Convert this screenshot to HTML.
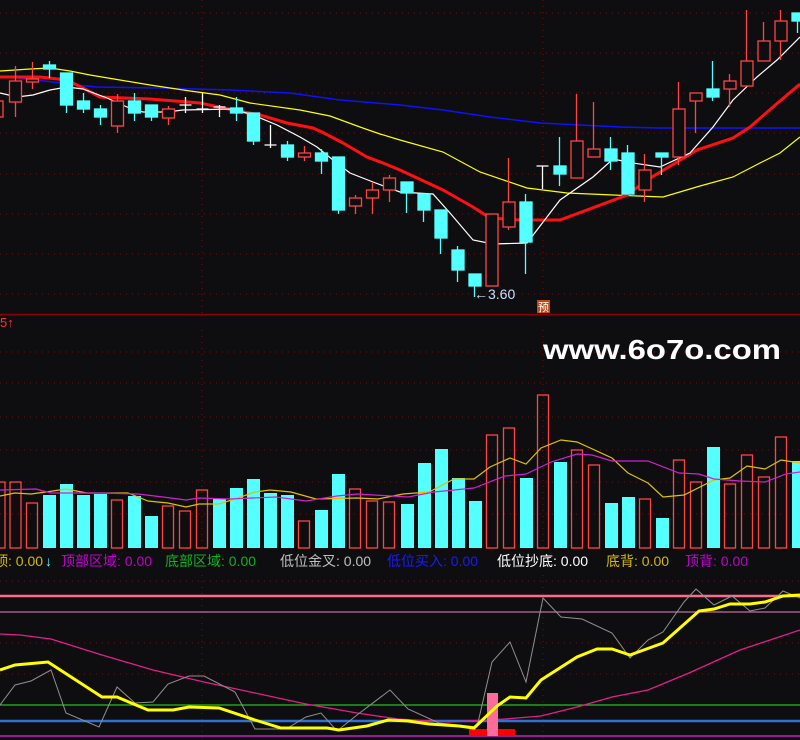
<!DOCTYPE html>
<html><head><meta charset="utf-8"><style>
html,body{margin:0;padding:0;background:#0e0e11;width:800px;height:740px;overflow:hidden}
svg{display:block}
text{font-family:"Liberation Sans","Noto Sans CJK SC",sans-serif}
</style></head><body>
<svg width="800" height="740" viewBox="0 0 800 740" xmlns="http://www.w3.org/2000/svg">
<rect width="800" height="740" fill="#0e0e11"/>
<g stroke="#7a0e0e" stroke-width="1" stroke-dasharray="1,5">
<path d="M0 13H800M0 53H800M0 93H800M0 133H800M0 174H800M0 214H800M0 254H800M0 294H800"/>
<path d="M0 352H800M0 383H800M0 417H800M0 450H800M0 482H800M0 514H800"/>
<path d="M0 581H800M0 643H800M0 674H800"/>
<path d="M202 0V314M543 0V314M202 330V548M543 330V548M202 575V740M543 575V740"/>
</g>
<line x1="0" y1="314.5" x2="800" y2="314.5" stroke="#8a0000" stroke-width="1.5"/>
<text x="0" y="327" fill="#ff3030" font-size="13">5↑</text>

<!-- MA lines main -->
<polyline fill="none" stroke="#1010ff" stroke-width="1.5" points="0,76 27,79 53,82 77,85 97,87 160,88 230,90 290,93 340,100 400,105 443,110 490,117 540,123 580,125 620,127 660,128 800,128"/>
<polyline fill="none" stroke="#ffff00" stroke-width="1.2" points="0,71 30,69 50,68 70,71 90,75 120,80 150,85 190,91 220,95 250,103 300,110 330,116 360,127 380,134 400,140 443,152 480,172 527,188 567,193 613,195 663,197 700,186 733,177 760,163 780,153 800,137"/>
<polyline fill="none" stroke="#ff1010" stroke-width="3" points="0,77 40,77 67,80 83,88 100,97 150,99 200,103 233,110 260,115 287,123 313,128 322,132 343,143 367,157 383,163 400,170 443,190 473,207 490,218 520,220 560,220 587,210 627,195 647,180 697,150 733,138 750,127 773,107 800,84"/>
<polyline fill="none" stroke="#ffffff" stroke-width="1.2" points="0,93 17,97 33,95 50,90 67,87 83,89 107,98 127,107 143,112 167,112 183,110 233,109 253,115 277,125 300,137 317,147 333,160 350,173 373,182 400,192 433,194 450,213 473,240 493,244 527,243 560,200 593,177 613,159 633,163 660,167 690,153 713,127 733,100 757,77 777,60 800,37"/>

<!-- candles -->
<g stroke-width="1.3">
<g stroke="#ff4444" fill="#0e0e11">
<line x1="-1.5" y1="95" x2="-1.5" y2="122"/><rect x="-8" y="101" width="11" height="16"/>
<line x1="15.5" y1="66" x2="15.5" y2="117"/><rect x="9.5" y="81" width="12" height="21"/>
<line x1="32.5" y1="62" x2="32.5" y2="89"/><rect x="26.5" y="79" width="12" height="3"/>
<line x1="117.5" y1="94" x2="117.5" y2="133"/><rect x="111.5" y="101" width="12" height="25"/>
<line x1="168.5" y1="106" x2="168.5" y2="125"/><rect x="162.5" y="109" width="12" height="9"/>
<line x1="304.5" y1="146" x2="304.5" y2="161"/><rect x="298.5" y="153" width="12" height="4"/>
<line x1="355.5" y1="195" x2="355.5" y2="214"/><rect x="349.5" y="198" width="12" height="8"/>
<line x1="372.5" y1="182" x2="372.5" y2="214"/><rect x="366.5" y="190" width="12" height="8"/>
<line x1="389.5" y1="175" x2="389.5" y2="202"/><rect x="383.5" y="178" width="12" height="12"/>
<rect x="486" y="214" width="12" height="72"/>
<line x1="508.5" y1="158" x2="508.5" y2="230"/><rect x="503" y="202" width="12" height="25"/>
<line x1="576.5" y1="94" x2="576.5" y2="178"/><rect x="571" y="141" width="12" height="37"/>
<line x1="593.5" y1="102" x2="593.5" y2="157"/><rect x="588" y="149" width="12" height="8"/>
<line x1="644.5" y1="154" x2="644.5" y2="202"/><rect x="639" y="170" width="12" height="20"/>
<line x1="678.5" y1="82" x2="678.5" y2="165"/><rect x="673" y="109" width="12" height="48"/>
<line x1="695.5" y1="93" x2="695.5" y2="133"/><rect x="690" y="93" width="12" height="8"/>
<line x1="729.5" y1="74" x2="729.5" y2="107"/><rect x="724" y="81" width="12" height="8"/>
<line x1="746.5" y1="10" x2="746.5" y2="86"/><rect x="741" y="61" width="12" height="25"/>
<line x1="763.5" y1="22" x2="763.5" y2="61"/><rect x="758" y="41" width="12" height="20"/>
<line x1="780.5" y1="10" x2="780.5" y2="60"/><rect x="775" y="21" width="12" height="20"/>
</g>
<g stroke="#54ffff" fill="#54ffff">
<line x1="49.5" y1="61" x2="49.5" y2="78"/><rect x="43.5" y="65" width="12" height="4"/>
<line x1="66.5" y1="73" x2="66.5" y2="113"/><rect x="60.5" y="73" width="12" height="32"/>
<line x1="83.5" y1="93" x2="83.5" y2="113"/><rect x="77.5" y="101" width="12" height="8"/>
<line x1="100.5" y1="105" x2="100.5" y2="125"/><rect x="94.5" y="109" width="12" height="8"/>
<line x1="134.5" y1="93" x2="134.5" y2="121"/><rect x="128.5" y="101" width="12" height="12"/>
<line x1="151.5" y1="105" x2="151.5" y2="121"/><rect x="145.5" y="105" width="12" height="12"/>
<line x1="236.5" y1="97" x2="236.5" y2="121"/><rect x="230.5" y="108" width="12" height="5"/>
<line x1="253.5" y1="113" x2="253.5" y2="145"/><rect x="247.5" y="113" width="12" height="28"/>
<line x1="287.5" y1="141" x2="287.5" y2="161"/><rect x="281.5" y="145" width="12" height="12"/>
<line x1="321.5" y1="149" x2="321.5" y2="174"/><rect x="315.5" y="153" width="12" height="8"/>
<line x1="338.5" y1="157" x2="338.5" y2="214"/><rect x="332.5" y="157" width="12" height="53"/>
<line x1="406.5" y1="182" x2="406.5" y2="213"/><rect x="401" y="182" width="12" height="11"/>
<line x1="423.5" y1="194" x2="423.5" y2="222"/><rect x="418" y="194" width="12" height="16"/>
<line x1="440.5" y1="210" x2="440.5" y2="254"/><rect x="435" y="210" width="12" height="28"/>
<line x1="457.5" y1="246" x2="457.5" y2="282"/><rect x="452" y="250" width="12" height="20"/>
<line x1="474.5" y1="274" x2="474.5" y2="297"/><rect x="469" y="274" width="12" height="12"/>
<line x1="525.5" y1="194" x2="525.5" y2="274"/><rect x="520" y="202" width="12" height="40"/>
<line x1="559.5" y1="137" x2="559.5" y2="186"/><rect x="554" y="166" width="12" height="8"/>
<line x1="610.5" y1="137" x2="610.5" y2="170"/><rect x="605" y="149" width="12" height="12"/>
<line x1="627.5" y1="145" x2="627.5" y2="194"/><rect x="622" y="153" width="12" height="41"/>
<line x1="661.5" y1="153" x2="661.5" y2="175"/><rect x="656" y="153" width="12" height="4"/>
<line x1="712.5" y1="61" x2="712.5" y2="101"/><rect x="707" y="89" width="12" height="8"/>
<line x1="797.5" y1="13" x2="797.5" y2="33"/><rect x="792" y="13" width="12" height="8"/>
</g>
<g stroke="#ffffff">
<path d="M185.5 97V113M179.5 105H191.5"/>
<path d="M202.5 93V113M196.5 109H208.5"/>
<path d="M219.5 105V117M213.5 107H225.5"/>
<path d="M270.5 125V148M264.5 145H276.5"/>
<path d="M542.5 166V189M536.5 166H548.5"/>
</g>
</g>
<text x="474" y="299" fill="#c8e0ff" font-size="14">←3.60</text>
<rect x="537" y="300" width="13" height="13" fill="#c04a10"/>
<text x="538" y="311" fill="#ffffff" font-size="11">预</text>

<text x="543" y="359" fill="#ffffff" font-size="28" font-weight="bold" textLength="238" lengthAdjust="spacingAndGlyphs">www.6o7o.com</text>

<!-- volume bars -->
<g fill="#54ffff">
<rect x="43" y="495" width="13" height="53"/><rect x="60" y="484" width="13" height="64"/><rect x="77" y="495" width="13" height="53"/><rect x="94" y="494" width="13" height="54"/>
<rect x="128" y="496" width="13" height="52"/><rect x="145" y="516" width="13" height="32"/>
<rect x="213" y="499" width="13" height="49"/><rect x="230" y="488" width="13" height="60"/><rect x="247" y="479" width="13" height="69"/><rect x="264" y="493" width="13" height="55"/><rect x="281" y="495" width="13" height="53"/>
<rect x="315" y="510" width="13" height="38"/><rect x="332" y="474" width="13" height="74"/>
<rect x="401" y="504" width="13" height="44"/><rect x="418" y="463" width="13" height="85"/><rect x="435" y="449" width="13" height="99"/><rect x="452" y="478" width="13" height="70"/><rect x="469" y="501" width="13" height="47"/>
<rect x="520" y="478" width="13" height="70"/><rect x="554" y="462" width="13" height="86"/>
<rect x="605" y="503" width="13" height="45"/><rect x="622" y="497" width="13" height="51"/><rect x="656" y="518" width="13" height="30"/>
<rect x="707" y="447" width="13" height="101"/><rect x="792" y="461" width="13" height="87"/>
</g>
<g fill="none" stroke="#ff4444" stroke-width="1.3">
<rect x="-6" y="482" width="11" height="66"/><rect x="10" y="482" width="11" height="66"/><rect x="26.5" y="503" width="11" height="45"/>
<rect x="111.5" y="500" width="11" height="48"/><rect x="162.5" y="506" width="11" height="42"/><rect x="179.5" y="511" width="11" height="37"/><rect x="196.5" y="490" width="11" height="58"/>
<rect x="298.5" y="521" width="11" height="27"/><rect x="349.5" y="489" width="11" height="59"/><rect x="366.5" y="501" width="11" height="47"/><rect x="383.5" y="502" width="11" height="46"/>
<rect x="486.5" y="435" width="11" height="113"/><rect x="503.5" y="428" width="11" height="120"/><rect x="537.5" y="395" width="11" height="153"/><rect x="571.5" y="450" width="11" height="98"/><rect x="588.5" y="465" width="11" height="83"/>
<rect x="639.5" y="499" width="11" height="49"/><rect x="673.5" y="460" width="11" height="88"/><rect x="690.5" y="482" width="11" height="66"/><rect x="724.5" y="484" width="11" height="64"/><rect x="741.5" y="455" width="11" height="93"/><rect x="758.5" y="477" width="11" height="71"/><rect x="775.5" y="437" width="11" height="111"/>
</g>
<polyline fill="none" stroke="#e0c000" stroke-width="1.2" points="0,496 15,493 31,494 46,492 66,489 87,493 128,493 148,501 168,503 186,507 199,504 219,504 235,499 255,492 270,490 291,492 316,499 357,498 378,499 403,494 429,492 454,479 474,479 490,467 510,458 526,464 541,448 561,440 577,442 612,458 628,473 648,483 663,497 684,495 714,480 730,478 747,466 765,469 781,460 800,463"/>
<polyline fill="none" stroke="#d020d0" stroke-width="1.2" points="0,490 36,489 51,493 102,493 138,494 163,497 186,500 199,498 230,499 276,497 306,501 337,496 357,494 408,497 434,492 474,488 505,476 526,474 551,462 577,454 592,455 612,461 648,461 679,473 699,474 714,479 740,481 765,482 786,474 800,472"/>

<!-- legend -->
<g font-size="14">
<text x="-6" y="566" fill="#d4b800">顶: 0.00</text>
<text x="45" y="566" fill="#54ffff">↓</text>
<text x="61" y="566" fill="#c000d0">顶部区域: 0.00</text>
<text x="165" y="566" fill="#10b020">底部区域: 0.00</text>
<text x="280" y="566" fill="#c0c0c0">低位金叉: 0.00</text>
<text x="387" y="566" fill="#1a1aff">低位买入: 0.00</text>
<text x="497" y="566" fill="#ffffff">低位抄底: 0.00</text>
<text x="606" y="566" fill="#d4b800">底背: 0.00</text>
<text x="685" y="566" fill="#c000d0">顶背: 0.00</text>
</g>

<!-- bottom indicator -->
<line x1="0" y1="596" x2="800" y2="596" stroke="#ff6b8b" stroke-width="2.5"/>
<line x1="0" y1="612" x2="800" y2="612" stroke="#c070a0" stroke-width="1.2"/>
<line x1="0" y1="705" x2="800" y2="705" stroke="#20c020" stroke-width="1.2"/>
<line x1="0" y1="721" x2="800" y2="721" stroke="#3070d0" stroke-width="2.5"/>
<line x1="0" y1="736" x2="800" y2="736" stroke="#c020c0" stroke-width="1.5"/>
<polyline fill="none" stroke="#e0208a" stroke-width="1.3" points="0,634 20,635 51,639 102,655 153,670 204,682 255,693 306,704 357,713 398,719 449,722 505,719 541,716 577,707 612,697 648,690 689,673 740,650 800,630"/>
<polyline fill="none" stroke="#909090" stroke-width="1" points="0,705 15,685 31,681 51,670 66,713 99,727 117,687 135,703 153,702 168,684 189,676 204,676 235,692 255,729 286,729 306,717 321,713 337,731 357,715 390,690 408,709 439,723 477,727 492,662 510,642 526,682 543,598 561,617 582,619 612,633 630,658 648,640 663,632 684,602 696,589 714,605 732,596 750,611 765,608 783,591 800,598"/>
<rect x="469" y="729" width="46" height="7" fill="#ff0000"/>
<rect x="487" y="693" width="11" height="43" fill="#ff6b9b"/>
<polyline fill="none" stroke="#ffff00" stroke-width="3" points="0,670 15,665 48,662 102,697 117,697 148,710 173,710 189,707 219,708 255,720 281,728 327,728 339,730 367,726 388,720 408,721 429,724 459,726 474,728 497,706 510,697 526,698 541,680 577,657 597,649 612,649 630,655 663,643 699,611 714,609 730,604 750,604 765,602 783,596 800,595"/>
</svg>
</body></html>
